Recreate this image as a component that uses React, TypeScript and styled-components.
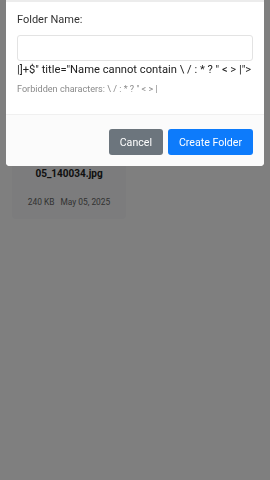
import React from "react";
import styled, { createGlobalStyle } from "styled-components";

const Global = createGlobalStyle`
  html, body { margin: 0; padding: 0; }
  body {
    width: 270px;
    height: 480px;
    overflow: hidden;
    background: #ffffff;
    font-family: Roboto, "Noto Sans", "Liberation Sans", sans-serif;
  }
  * { box-sizing: border-box; }
`;

const Page = styled.div`
  width: 270px;
  height: 480px;
  display: grid;
  grid-template-columns: 114px 114px;
  gap: 8px;
  padding: 0 12px;
  align-content: start;
`;

const FileCard = styled.div`
  background: #f8f9fa;
  border-radius: 4px;
  padding: 166px 4px 12px;
  display: flex;
  flex-direction: column;
  align-items: center;
  gap: 16px;
`;

const FileName = styled.div`
  font-size: 10px;
  font-weight: 700;
  color: #222;
  line-height: 15px;
`;

const FileMeta = styled.div`
  font-size: 8.4px;
  color: #666;
  display: flex;
  gap: 6px;
`;

const Backdrop = styled.div`
  position: fixed;
  inset: 0;
  background: rgba(0, 0, 0, 0.5);
  padding: 0 6px;
`;

const Dialog = styled.div`
  background: #fff;
  border-radius: 0 0 4px 4px;
  overflow: hidden;
  border-top: 2px solid #ececec;
`;

const Body = styled.div`
  padding: 10px 11px 18px;
  display: flex;
  flex-direction: column;
`;

const Label = styled.label`
  font-size: 11px;
  line-height: 16.5px;
  color: #333;
  margin-bottom: 6.5px;
`;

const Input = styled.div`
  height: 26px;
  border: 1px solid #e3e3e3;
  border-radius: 3px;
  background: #fff;
`;

const Leaked = styled.div`
  font-size: 11.2px;
  line-height: 16.5px;
  color: #222;
  white-space: nowrap;
  margin-top: 1px;
`;

const Hint = styled.div`
  font-size: 9.1px;
  color: #8a8a8a;
  line-height: 13.5px;
  margin-top: 4px;
`;

const Footer = styled.div`
  border-top: 1px solid #f0f0f0;
  background: #fbfbfb;
  padding: 14px 11px 11px;
  display: flex;
  justify-content: flex-end;
  gap: 5px;
`;

const Button = styled.button<{ $variant: "secondary" | "primary" }>`
  height: 26px;
  border: none;
  border-radius: 3px;
  padding: 0 11px;
  font-family: inherit;
  font-size: 10.6px;
  color: #fff;
  background: ${(p) => (p.$variant === "primary" ? "#0d7bfb" : "#6c757d")};
`;

export default function App() {
  return (
    <>
      <Global />
      <Page>
        <FileCard>
          <FileName>05_140034.jpg</FileName>
          <FileMeta>
            <span>240 KB</span>
            <span>May 05, 2025</span>
          </FileMeta>
        </FileCard>
      </Page>
      <Backdrop>
        <Dialog>
          <Body>
            <Label>Folder Name:</Label>
            <Input />
            <Leaked>{`|]+$" title="Name cannot contain \\ / : * ? " < > |">`}</Leaked>
            <Hint>{`Forbidden characters: \\ / : * ? " < > |`}</Hint>
          </Body>
          <Footer>
            <Button $variant="secondary">Cancel</Button>
            <Button $variant="primary">Create Folder</Button>
          </Footer>
        </Dialog>
      </Backdrop>
    </>
  );
}
